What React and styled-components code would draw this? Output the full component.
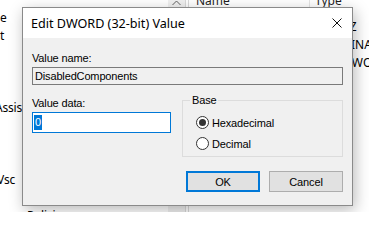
import React from 'react';
import styled, { createGlobalStyle } from 'styled-components';

const GlobalStyle = createGlobalStyle`
  *, *::before, *::after {
    box-sizing: border-box;
  }

  html, body {
    margin: 0;
    padding: 0;
    background: #ffffff;
  }

  body {
    font-family: "Segoe UI", "Noto Sans", "Open Sans", sans-serif;
    font-size: 12px;
    color: #000000;
  }
`;

const Screen = styled.div`
  position: relative;
  width: 369px;
  height: 212px;
  overflow: hidden;

  display: flex;
  background: #ffffff;
`;

const TreePane = styled.div`
  width: 168px;
  flex-shrink: 0;
  padding-top: 9px;
  overflow: hidden;

  display: flex;
  flex-direction: column;
`;

const TreeRow = styled.div`
  height: 18px;
  flex-shrink: 0;
  margin-left: ${props => props.indent || 0}px;

  display: flex;
  align-items: center;

  white-space: nowrap;
  line-height: 18px;
  letter-spacing: -0.2px;
`;

const ScrollBar = styled.div`
  width: 17px;
  flex-shrink: 0;
  background: #f0f0f0;

  display: flex;
  justify-content: center;
`;

const Splitter = styled.div`
  width: 4px;
  flex-shrink: 0;
  border-left: 1px solid #d9d9d9;
  border-right: 1px solid #d9d9d9;
  background: #ffffff;
`;

const ListPane = styled.div`
  flex: 1;
  overflow: hidden;

  display: flex;
  flex-direction: column;
`;

const ListHeader = styled.div`
  height: 17px;
  flex-shrink: 0;
  overflow: hidden;

  display: flex;
`;

const HeaderCell = styled.div`
  width: ${props => props.width}px;
  flex-shrink: 0;
  padding-left: ${props => props.pad}px;
  border-right: ${props => (props.divider ? '1px solid #e5e5e5' : 'none')};

  line-height: 14px;
  margin-top: -6px;
  color: #1e1e1e;
  white-space: nowrap;
`;

const ListRow = styled.div`
  height: 18px;
  flex-shrink: 0;

  display: flex;
  align-items: center;
`;

const ListCell = styled.div`
  width: ${props => props.width}px;
  flex-shrink: 0;
  padding-left: ${props => props.pad}px;

  white-space: nowrap;
`;

const Dialog = styled.div`
  position: absolute;
  left: 22px;
  top: 7px;
  width: 331px;
  height: 199px;

  border: 1px solid #8a8a8a;
  background: #f0f0f0;
  box-shadow: 2px 4px 14px rgba(0, 0, 0, 0.28);

  display: flex;
  flex-direction: column;
`;

const TitleBar = styled.div`
  height: 30px;
  padding: 0 10px 0 8px;
  background: #ffffff;

  display: flex;
  align-items: center;
  justify-content: space-between;
`;

const Title = styled.span`
  font-size: 12.6px;
`;

const DialogBody = styled.div`
  padding: 12px 9px 0 9px;

  display: flex;
  flex-direction: column;

  font-family: "Liberation Sans", Arial, sans-serif;
  font-size: 11px;
  letter-spacing: -0.15px;
`;

const Label = styled.div`
  height: 16px;
  line-height: 16px;
`;

const ReadOnlyBox = styled.div`
  margin-top: 1px;
  height: 18px;
  padding-left: 2px;

  border: 1px solid #7a7a7a;
  background: #f0f0f0;

  display: flex;
  align-items: center;
`;

const DataRow = styled.div`
  margin-top: 10px;

  display: grid;
  grid-template-columns: 139px 1fr;
  column-gap: 11px;
  align-items: start;
`;

const DataColumn = styled.div`
  display: flex;
  flex-direction: column;
`;

const EditBox = styled.div`
  margin-top: 1px;
  height: 21px;
  padding-left: 1px;

  border: 1px solid #0078d7;
  background: #ffffff;

  display: flex;
  align-items: center;
`;

const Selection = styled.span`
  padding: 0 1px;
  background: #0078d7;
  color: #ffffff;
  line-height: 15px;
`;

const GroupBox = styled.div`
  position: relative;
  margin-top: 5px;
  height: 57px;
  padding: 11px 0 0 13px;

  border: 1px solid #dcdcdc;

  display: flex;
  flex-direction: column;
`;

const GroupTitle = styled.span`
  position: absolute;
  top: -9px;
  left: 7px;
  padding: 0 2px;

  background: #f0f0f0;
  line-height: 16px;
`;

const RadioRow = styled.div`
  height: 21px;

  display: flex;
  align-items: center;
  gap: 3px;
`;

const RadioCircle = styled.span`
  width: 13px;
  height: 13px;
  border-radius: 50%;

  border: 1px solid #333333;
  background: #ffffff;

  display: flex;
  align-items: center;
  justify-content: center;

  &::after {
    content: '';
    width: 7px;
    height: 7px;
    border-radius: 50%;
    background: ${props => (props.checked ? '#333333' : 'transparent')};
  }
`;

const ButtonRow = styled.div`
  margin-top: 14px;

  display: flex;
  justify-content: flex-end;
  gap: 9px;
`;

const Button = styled.div`
  width: 74px;
  height: 21px;

  border: ${props => (props.primary ? '2px solid #0078d7' : '1px solid #adadad')};
  background: #e1e1e1;

  display: flex;
  align-items: center;
  justify-content: center;
`;

const treeRows = [
  { text: 'e' },
  { text: 't' },
  { text: '' },
  { text: '' },
  { text: '' },
  { text: 'Assis', indent: -5 },
  { text: '' },
  { text: '' },
  { text: '' },
  { text: 'Vsc', indent: -3 },
  { text: '' },
  { text: 'Policies', indent: 27 },
];

const listRows = ['REG_SZ', 'REG_BINARY', 'REG_DWORD'];

const CloseIcon = () => (
  <svg width="10" height="10" viewBox="0 0 10 10">
    <path d="M0.5 0.5 L9.5 9.5 M9.5 0.5 L0.5 9.5" stroke="#111" strokeWidth="1" />
  </svg>
);

const UpArrow = () => (
  <svg width="9" height="6" viewBox="0 0 9 6">
    <path d="M0.5 5 L4.5 1 L8.5 5" stroke="#606060" strokeWidth="1" fill="none" />
  </svg>
);

export default function App() {
  return (
    <>
      <GlobalStyle />
      <Screen>
        <TreePane>
          {treeRows.map((row, i) => (
            <TreeRow key={i} indent={row.indent}>{row.text}</TreeRow>
          ))}
        </TreePane>
        <ScrollBar>
          <UpArrow />
        </ScrollBar>
        <Splitter />
        <ListPane>
          <ListHeader>
            <HeaderCell width={121} pad={7} divider>Name</HeaderCell>
            <HeaderCell width={60} pad={5}>Type</HeaderCell>
          </ListHeader>
          {listRows.map((type, i) => (
            <ListRow key={i}>
              <ListCell width={121} pad={7} />
              <ListCell width={60} pad={5}>{type}</ListCell>
            </ListRow>
          ))}
        </ListPane>

        <Dialog>
          <TitleBar>
            <Title>Edit DWORD (32-bit) Value</Title>
            <CloseIcon />
          </TitleBar>
          <DialogBody>
            <Label>Value name:</Label>
            <ReadOnlyBox>DisabledComponents</ReadOnlyBox>
            <DataRow>
              <DataColumn>
                <Label>Value data:</Label>
                <EditBox>
                  <Selection>0</Selection>
                </EditBox>
              </DataColumn>
              <GroupBox>
                <GroupTitle>Base</GroupTitle>
                <RadioRow>
                  <RadioCircle checked />
                  Hexadecimal
                </RadioRow>
                <RadioRow>
                  <RadioCircle />
                  Decimal
                </RadioRow>
              </GroupBox>
            </DataRow>
            <ButtonRow>
              <Button primary>OK</Button>
              <Button>Cancel</Button>
            </ButtonRow>
          </DialogBody>
        </Dialog>
      </Screen>
    </>
  );
}
